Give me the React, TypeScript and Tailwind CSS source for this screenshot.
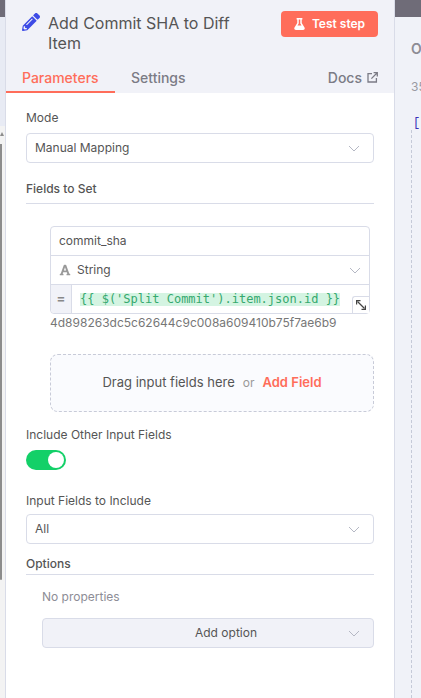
import React from "react";
import { FaPencilAlt, FaFlask, FaFont } from "react-icons/fa";

const Chevron = ({ className = "" }: { className?: string }) => (
  <svg width="12" height="7" viewBox="0 0 12 7" fill="none" className={className}>
    <path d="M1 1l5 5 5-5" stroke="#b5b8c4" strokeWidth="1" />
  </svg>
);

const SelectBox = ({ label }: { label: string }) => (
  <div className="h-[30px] border border-[#d9dce8] rounded-[4px] bg-white flex items-center justify-between pl-[8px] pr-[13px] text-[12px] text-[#555]">
    <span>{label}</span>
    <Chevron />
  </div>
);

export default function App() {
  return (
    <div className="w-[421px] h-[698px] overflow-hidden flex bg-white font-['Inter',sans-serif]">
      <div className="w-[5px] h-full flex flex-col shrink-0 bg-[#f3f3f3]">
        <div className="h-[17px] bg-[#6f6c78]" />
        <div className="h-[109px] bg-[#e8ebf4]" />
        <div className="w-0 h-0 mt-[6px] border-x-[2px] border-b-[4px] border-x-transparent border-b-[#8c8c8c]" />
        <div className="w-[2px] h-[436px] mt-[8px] bg-[#8c8c8c] rounded-b-[2px]" />
      </div>

      <div className="w-[390px] h-full shrink-0 border-x border-[#d9dce8] flex flex-col bg-white">
        <div className="h-[93px] bg-[#f1f2f8] shrink-0 flex flex-col">
          <div className="flex items-start h-[62px] pl-[16px] pr-[16px]">
            <FaPencilAlt className="text-[#3d4be6] w-[18px] h-[18px] mt-[13px] shrink-0" />
            <div className="ml-[8px] mt-[13px] w-[205px] text-[16px] leading-[20px] text-[#555555]">
              Add Commit SHA to Diff Item
            </div>
            <div className="ml-auto mt-[11px] w-[97px] h-[26px] rounded-[4px] bg-[#ff6d5a] text-white flex items-center justify-center gap-[7px] text-[12px] font-semibold">
              <FaFlask className="w-[11px] h-[12px]" />
              <span>Test step</span>
            </div>
          </div>
          <div className="flex h-[31px] text-[14px] text-[#7b7b85]">
            <div className="w-[109px] h-full border-b-2 border-[#ff6d5a] text-[#ff6d5a] pl-[16px] pt-[5px] font-medium">Parameters</div>
            <div className="ml-[16px] pt-[5px] font-medium">Settings</div>
            <div className="ml-auto pr-[16px] pt-[5px] flex items-start gap-[5px] font-medium">
              <span>Docs</span>
              <svg width="11" height="11" viewBox="0 0 11 11" fill="none" className="mt-[5px]" stroke="#7b7b85" strokeWidth="1.3">
                <path d="M5 1.6H1v8.4h8.4V6" />
                <path d="M4.4 6.6L10 1M6.6.7h3.7v3.7" />
              </svg>
            </div>
          </div>
        </div>

        <div className="flex-1 pl-[20px] pr-[20px] text-[12px] text-[#555555]">
          <div className="pt-[17px] h-[40px] leading-[16px]">Mode</div>
          <SelectBox label="Manual Mapping" />

          <div className="mt-[18px] pb-[6px] leading-[16px] border-b border-[#d9dce8] font-medium">Fields to Set</div>

          <div className="ml-[24px] mr-[4px] mt-[22px] border border-[#d9dce8] rounded-[4px] bg-white text-[12px]">
            <div className="h-[29px] flex items-center pl-[8px] border-b border-[#d9dce8]">commit_sha</div>
            <div className="h-[29px] flex items-center pl-[8px] pr-[8px] border-b border-[#d9dce8]">
              <FaFont className="text-[#999] w-[12px] h-[12px]" />
              <span className="ml-[6px]">String</span>
              <Chevron className="ml-auto" />
            </div>
            <div className="h-[28px] flex relative">
              <div className="w-[21px] bg-[#f1f2f8] border-r border-[#d9dce8] rounded-bl-[4px] flex items-center justify-center text-[#888] font-bold text-[13px]">=</div>
              <div className="pl-[8px] flex items-center font-['DejaVu_Sans_Mono',monospace] text-[12px]">
                <span className="bg-[#d4f4e2] text-[#35a96e] leading-[13px] whitespace-nowrap">{"{{ $('Split Commit').item.json.id }}"}</span>
              </div>
              <div className="absolute right-0 bottom-0 w-[17px] h-[17px] bg-white border-l border-t border-[#d9dce8] rounded-tl-[3px] flex items-center justify-center">
                <svg width="10" height="10" viewBox="0 0 10 10" fill="none" stroke="#444" strokeWidth="1.2">
                  <path d="M1.5 1.5L8.5 8.5" />
                  <path d="M.6 4.5V.6h3.9M9.4 5.5v3.9H5.5" />
                </svg>
              </div>
            </div>
          </div>
          <div className="ml-[24px] mt-[1px] leading-[16px] text-[#777] text-[12px] whitespace-nowrap">4d898263dc5c62644c9c008a609410b75f7ae6b9</div>

          <div className="ml-[24px] mt-[23px] h-[58px] border border-dashed border-[#c8cbd8] rounded-[8px] bg-[#fafbfe] flex items-center justify-center text-[13px]">
            <span>Drag input fields here</span>
            <span className="ml-[8px] text-[12px] text-[#999]">or</span>
            <span className="ml-[8px] text-[#ff6d5a] font-semibold">Add Field</span>
          </div>

          <div className="mt-[15px] leading-[16px]">Include Other Input Fields</div>
          <div className="mt-[7px] w-[40px] h-[20px] rounded-full bg-[#13d068] flex items-center justify-end pr-[2px]">
            <div className="w-[16px] h-[16px] rounded-full bg-white" />
          </div>

          <div className="mt-[23px] leading-[16px]">Input Fields to Include</div>
          <div className="mt-[5px]"><SelectBox label="All" /></div>

          <div className="mt-[12px] pb-[2px] leading-[16px] border-b border-[#d9dce8] font-medium">Options</div>

          <div className="ml-[16px] mt-[14px] leading-[16px] text-[#8d8d96]">No properties</div>
          <div className="ml-[16px] mt-[13px] h-[30px] relative border border-[#d9dce8] rounded-[4px] bg-[#f1f2f8] flex items-center justify-center pl-[36px] text-[12px]">
            <span>Add option</span>
            <Chevron className="absolute right-[13px]" />
          </div>
        </div>
      </div>

      <div className="flex-1 h-full overflow-hidden flex flex-col bg-[#f0f2f8] whitespace-nowrap">
        <div className="h-[17px] bg-[#6f6c78] shrink-0" />
        <div className="pl-[16px] mt-[23px] text-[14px] leading-[18px] font-semibold text-[#8c8c94]">Output</div>
        <div className="pl-[16px] mt-[21px] text-[12px] leading-[16px] text-[#9a9aa2]">35 items</div>
        <div className="pl-[18px] mt-[21px] font-['Liberation_Mono',monospace] text-[12px] leading-[14px] text-[#3b2fb8]">[</div>
        <div className="ml-[16px] flex-1 border-l border-dashed border-[#c5cad8]" />
      </div>
    </div>
  );
}
